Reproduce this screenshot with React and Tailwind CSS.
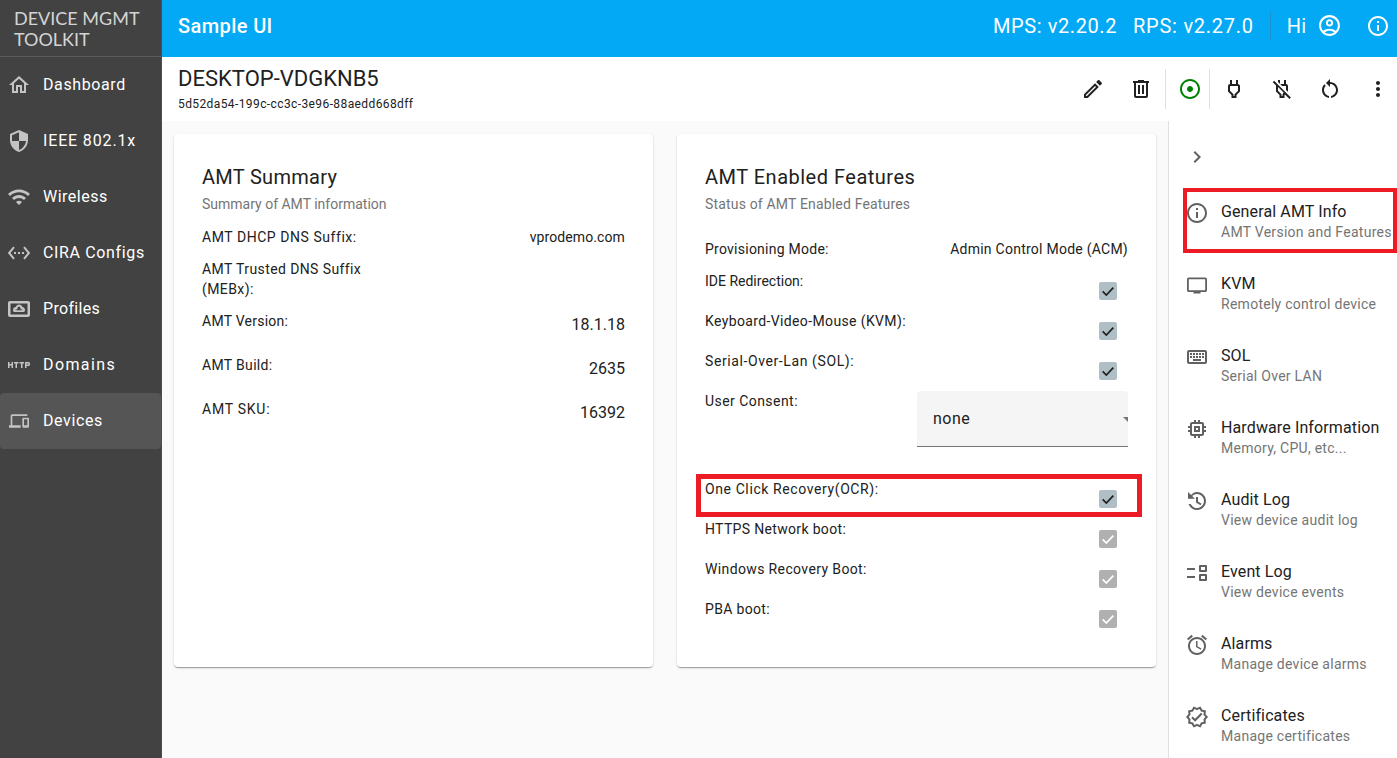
import React from "react";

const icons = {
  home: "M12 5.69l5 4.5V18h-2v-6H9v6H7v-7.81l5-4.5M12 3L2 12h3v8h6v-6h2v6h6v-8h3L12 3z",
  shield: "M12 1L3 5v6c0 5.55 3.84 10.74 9 12 5.16-1.26 9-6.45 9-12V5l-9-4zm0 10.99h7c-.53 4.12-3.28 7.79-7 8.94V12H5V6.3l7-3.11v8.8z",
  wifi: "M1 9l2 2c4.97-4.97 13.03-4.97 18 0l2-2C16.93 2.93 7.08 2.93 1 9zm8 8l3 3 3-3c-1.65-1.66-4.34-1.66-6 0zm-4-4l2 2c2.76-2.76 7.24-2.76 10 0l2-2C15.14 9.14 8.87 9.14 5 13z",
  ethernet: "M7.77 6.76L6.23 5.48.82 12l5.41 6.52 1.54-1.28L3.42 12l4.35-5.24zM7 13h2v-2H7v2zm10-2h-2v2h2v-2zm-6 2h2v-2h-2v2zm6.77-7.52l-1.54 1.28L20.58 12l-4.35 5.24 1.54 1.28L23.18 12l-5.41-6.52z",
  profile: "M3 4h18c1.1 0 2 .9 2 2v12c0 1.1-.9 2-2 2H3c-1.1 0-2-.9-2-2V6c0-1.1.9-2 2-2zm.5 2.5v11h17v-11h-17zM12 7.5c1.6 0 3 1.1 3.4 2.6 1.4.2 2.6 1.4 2.6 2.9 0 .8-.3 1.5-.8 2H6.8c-.5-.5-.8-1.2-.8-2 0-1.5 1.1-2.8 2.7-2.9.5-1.5 1.8-2.6 3.3-2.6zm-2.8 5c-.5 0-.9.3-.9.7h7.4c0-.4-.4-.7-.9-.7h-1l-.4-1.5c-.2-.7-.8-1.2-1.4-1.2s-1.2.5-1.4 1.2l-.4 1.5h-1z",
  http: "M4.5 11h-2V9H1v6h1.5v-2.5h2V15H6V9H4.5v2zm2.5-.5h1.5V15H10v-4.5h1.5V9H7v1.5zm5.5 0H14V15h1.5v-4.5H17V9h-4.5v1.5zm9-1.5H18v6h1.5v-2h2c.8 0 1.5-.7 1.5-1.5v-1c0-.8-.7-1.5-1.5-1.5zm0 2.5h-2v-1h2v1z",
  devices: "M4 6h18V4H4c-1.1 0-2 .9-2 2v11H0v3h14v-3H4V6zm19 2h-6c-.55 0-1 .45-1 1v10c0 .55.45 1 1 1h6c.55 0 1-.45 1-1V9c0-.55-.45-1-1-1zm-1 9h-4v-7h4v7z",
  account: "M12 2C6.48 2 2 6.48 2 12s4.48 10 10 10 10-4.48 10-10S17.52 2 12 2zM7.35 18.5C8.66 17.56 10.26 17 12 17s3.34.56 4.65 1.5c-1.31.94-2.91 1.5-4.65 1.5s-3.34-.56-4.65-1.5zm10.79-1.38C16.45 15.8 14.32 15 12 15s-4.45.8-6.14 2.12C4.7 15.73 4 13.95 4 12c0-4.42 3.58-8 8-8s8 3.58 8 8c0 1.95-.7 3.73-1.86 5.12zM12 6c-1.93 0-3.5 1.57-3.5 3.5S10.07 13 12 13s3.5-1.57 3.5-3.5S13.93 6 12 6zm0 5c-.83 0-1.5-.67-1.5-1.5S11.17 8 12 8s1.5.67 1.5 1.5S12.83 11 12 11z",
  info: "M11 7h2v2h-2zm0 4h2v6h-2zm1-9C6.48 2 2 6.48 2 12s4.48 10 10 10 10-4.48 10-10S17.52 2 12 2zm0 18c-4.41 0-8-3.59-8-8s3.59-8 8-8 8 3.59 8 8-3.59 8-8 8z",
  edit: "M3 17.25V21h3.75L17.81 9.94l-3.75-3.75L3 17.25zM5.92 19H5v-.92l9.06-9.06.92.92L5.92 19zM20.71 5.63l-2.34-2.34c-.2-.2-.45-.29-.71-.29s-.51.1-.7.29l-1.83 1.83 3.75 3.75 1.83-1.83c.39-.39.39-1.02 0-1.41z",
  trash: "M15 4V3H9v1H4v2h1v13c0 1.1.9 2 2 2h10c1.1 0 2-.9 2-2V6h1V4h-5zm2 15H7V6h10v13zM9 8h2v9H9zm4 0h2v9h-2z",
  adjust: "M12 2C6.49 2 2 6.49 2 12s4.49 10 10 10 10-4.49 10-10S17.51 2 12 2zm0 18c-4.41 0-8-3.59-8-8s3.59-8 8-8 8 3.59 8 8-3.59 8-8 8zm3-8c0 1.66-1.34 3-3 3s-3-1.34-3-3 1.34-3 3-3 3 1.34 3 3z",
  power: "M16 7V3h-2v4h-4V3H8v4h-.01C7 6.99 6 7.99 6 8.99v5.49L9.5 18v3h5v-3l3.5-3.51v-5.5c0-1-1-2-2-2zm0 6.65l-3.5 3.52V19h-1v-1.83L8 13.65V9h8v4.65z",
  powerOff: "M10 3H8v1.88l2 2zm6 6v3.88l1.8 1.8.2-.2V9c0-1.1-.9-2-2-2V3h-2v4h-3.88l2 2H16zM4.12 3.84L2.71 5.25 6.07 8.61c-.03.13-.07.26-.07.39v5.48L9.5 18v3h5v-3l.48-.48 4.47 4.47 1.41-1.41L4.12 3.84zm8.38 13.33V19h-1v-1.83L8 13.65v-3.73l5.57 5.57-1.07 1.68z",
  restart: "M12 5V2L8 6l4 4V7c3.31 0 6 2.69 6 6 0 2.97-2.17 5.43-5 5.91v2.02c3.95-.49 7-3.85 7-7.93 0-4.42-3.58-8-8-8zm-6 8c0-1.65.67-3.15 1.76-4.24L6.34 7.34C4.9 8.79 4 10.79 4 13c0 4.08 3.05 7.44 7 7.93v-2.02c-2.83-.48-5-2.94-5-5.91z",
  more: "M12 8c1.1 0 2-.9 2-2s-.9-2-2-2-2 .9-2 2 .9 2 2 2zm0 2c-1.1 0-2 .9-2 2s.9 2 2 2 2-.9 2-2-.9-2-2-2zm0 6c-1.1 0-2 .9-2 2s.9 2 2 2 2-.9 2-2-.9-2-2-2z",
  chevron: "M10 6L8.59 7.41 13.17 12l-4.58 4.59L10 18l6-6z",
  tv: "M20.2 4.5H3.8c-1 0-1.8.8-1.8 1.8v11c0 1 .8 1.8 1.8 1.8h4.7v1.4h7v-1.4h4.7c1 0 1.8-.8 1.8-1.8v-11c0-1-.8-1.8-1.8-1.8zm0 12.8H3.8v-11h16.4v11z",
  keyboard: "M20 7v10H4V7h16m0-2H4c-1.1 0-1.99.9-1.99 2L2 17c0 1.1.9 2 2 2h16c1.1 0 2-.9 2-2V7c0-1.1-.9-2-2-2zm-9 3h2v2h-2zm0 3h2v2h-2zM8 8h2v2H8zm0 3h2v2H8zm-3 0h2v2H5zm0-3h2v2H5zm3 6h8v2H8zm6-3h2v2h-2zm0-3h2v2h-2zm3 3h2v2h-2zm0-3h2v2h-2z",
  memory: "M15 9H9v6h6V9zm-2 4h-2v-2h2v2zm8-2V9h-2V7c0-1.1-.9-2-2-2h-2V3h-2v2h-2V3H9v2H7c-1.1 0-2 .9-2 2v2H3v2h2v2H3v2h2v2c0 1.1.9 2 2 2h2v2h2v-2h2v2h2v-2h2c1.1 0 2-.9 2-2v-2h2v-2h-2v-2h2zm-4 6H7V7h10v10z",
  history: "M12 3a9 9 0 1 1-8.49 12h2.14A7 7 0 1 0 12 5c-1.9 0-3.6.76-4.86 2L10 9.83H3V3l3.1 3.1C7.6 4.2 9.7 3 12 3zm-1 5h2v4.6l3.5 2.1-1 1.6-4.5-2.7V8z",
  events: "M2 7h8v2H2V7zm0 8h8v2H2v-2zM15 4h6a1 1 0 0 1 1 1v5a1 1 0 0 1-1 1h-6a1 1 0 0 1-1-1V5a1 1 0 0 1 1-1zm1 2v3h4V6h-4zm-1 7h6a1 1 0 0 1 1 1v5a1 1 0 0 1-1 1h-6a1 1 0 0 1-1-1v-5a1 1 0 0 1 1-1zm1 2v3h4v-3h-4z",
  alarm: "M22 5.72l-4.6-3.86-1.29 1.53 4.6 3.86L22 5.72zM7.88 3.39L6.6 1.86 2 5.71l1.29 1.53 4.59-3.85zM12.5 8H11v6l4.75 2.85.75-1.23-4-2.37V8zM12 4c-4.97 0-9 4.03-9 9s4.03 9 9 9 9-4.03 9-9-4.03-9-9-9zm0 16c-3.87 0-7-3.13-7-7s3.13-7 7-7 7 3.13 7 7-3.13 7-7 7z",
  verified: "M23 11.99l-2.44-2.79.34-3.69-3.61-.82L15.4 1.5 12 2.96 8.6 1.5 6.71 4.69 3.1 5.5l.34 3.7L1 11.99l2.44 2.79-.34 3.7 3.61.82 1.89 3.2 3.4-1.47 3.4 1.46 1.89-3.19 3.61-.82-.34-3.69 2.44-2.8zm-3.95 1.48l-.56.65.08.85.18 1.95-1.9.43-.84.19-.44.74-.99 1.68-1.78-.77-.8-.34-.79.34-1.78.77-.99-1.67-.44-.74-.84-.19-1.9-.43.18-1.96.08-.85-.56-.65L3.67 12l1.29-1.48.56-.65-.09-.85-.18-1.94 1.9-.43.84-.19.44-.74.99-1.68 1.78.77.8.34.79-.34 1.78-.77.99 1.68.44.74.84.19 1.9.43-.18 1.95-.08.85.56.65 1.29 1.47-1.28 1.48zM10.09 13.75l-2.32-2.33-1.48 1.49 3.8 3.81 7.34-7.36-1.48-1.49z",
};

const Icon = ({ name, className }) => (
  <svg viewBox="0 0 24 24" fill="currentColor" className={className}>
    <path d={icons[name]} />
  </svg>
);

const navItems = [
  { label: "Dashboard", icon: "home", track: "tracking-[0.6px]" },
  { label: "IEEE 802.1x", icon: "shield", track: "tracking-[0.85px]" },
  { label: "Wireless", icon: "wifi", track: "tracking-[0.5px]" },
  { label: "CIRA Configs", icon: "ethernet", track: "tracking-[0.65px]" },
  { label: "Profiles", icon: "profile", track: "tracking-[0.3px]" },
  { label: "Domains", icon: "http", track: "tracking-[1.4px]" },
  { label: "Devices", icon: "devices", track: "tracking-[0.6px]", size: "w-[20px] h-[20px]", active: true },
];

const panelItems = [
  { title: "General AMT Info", sub: "AMT Version and Features", icon: "info", marked: true },
  { title: "KVM", sub: "Remotely control device", icon: "tv" },
  { title: "SOL", sub: "Serial Over LAN", icon: "keyboard" },
  { title: "Hardware Information", sub: "Memory, CPU, etc...", icon: "memory" },
  { title: "Audit Log", sub: "View device audit log", icon: "history" },
  { title: "Event Log", sub: "View device events", icon: "events" },
  { title: "Alarms", sub: "Manage device alarms", icon: "alarm" },
  { title: "Certificates", sub: "Manage certificates", icon: "verified" },
];

const summaryRows = [
  { label: "AMT Version:", value: "18.1.18", track: "tracking-[0.25px]" },
  { label: "AMT Build:", value: "2635", track: "tracking-[0.33px]" },
  { label: "AMT SKU:", value: "16392", track: "tracking-[0.75px]" },
];

const cardClass = "w-[479px] h-[533px] bg-white rounded-[4px] shadow-[0_2px_1px_-1px_rgba(0,0,0,0.2),0_1px_1px_0_rgba(0,0,0,0.14),0_1px_3px_0_rgba(0,0,0,0.12)] pt-[30px]";

const Check = ({ muted }) => (
  <span className={`flex w-[18px] h-[18px] items-center justify-center rounded-[2px] ${muted ? "bg-[#b0b0b0]" : "bg-[#b0bec5]"}`}>
    <svg viewBox="0 0 24 24" className="w-[16px] h-[16px]" fill="none" stroke={muted ? "#ffffff" : "#212121"} strokeWidth="2.6">
      <path d="M4 12.5l5.5 5.5L20 7" />
    </svg>
  </span>
);

const FeatureRow = ({ label, muted, track }) => (
  <div className="flex justify-between h-[40px] pl-[28px] pr-[39px]">
    <span className={`text-[14px] leading-[20px] text-[#212121] ${track}`}>{label}</span>
    <span className="pt-[11px]"><Check muted={muted} /></span>
  </div>
);

export default function App() {
  return (
    <div className="flex w-[1397px] h-[758px] overflow-hidden bg-[#fafafa] font-['Roboto',sans-serif] text-[#212121]">
      <aside className="w-[162px] shrink-0 bg-[#424242] border-r border-[#4d4d4d] text-white">
        <div className="h-[57px] border-b border-[#5c5c5c] pl-[14px] pt-[8px] text-[18px] leading-[21px] text-[#d4d4d4] font-['Lato',sans-serif]">
          DEVICE MGMT<br />TOOLKIT
        </div>
        <nav>
          {navItems.map((item) => (
            <div key={item.label} className={`flex items-center h-[56px] rounded-[4px] ${item.active ? "bg-[#555555]" : ""}`}>
              <span className="flex w-[43px] justify-center pl-[1px] pr-[6px] text-[#c4c4c4]">
                <Icon name={item.icon} className={item.size || "w-[24px] h-[24px]"} />
              </span>
              <span className={`text-[16px] leading-[24px] ${item.track}`}>{item.label}</span>
            </div>
          ))}
        </nav>
      </aside>

      <div className="flex-1 min-w-0 flex flex-col">
        <header className="h-[57px] shrink-0 bg-[#03a9f4] text-white flex items-center pl-[16px] pb-[6px]">
          <span className="text-[20px] font-medium tracking-[0.4px]">Sample UI</span>
          <span className="ml-auto text-[20px] tracking-[0.6px]">MPS: v2.20.2</span>
          <span className="ml-[16px] text-[20px] tracking-[0.75px]">RPS: v2.27.0</span>
          <span className="ml-[16px] w-px h-[30px] bg-[#1a94cf]" />
          <span className="ml-[16px] text-[20px]">Hi</span>
          <Icon name="account" className="ml-[11px] w-[25px] h-[25px]" />
          <Icon name="info" className="ml-[24px] mr-[7px] w-[24px] h-[24px]" />
        </header>

        <div className="h-[64px] shrink-0 bg-white flex items-start pl-[16px]">
          <div className="pt-[9px]">
            <div className="text-[22px] leading-[26px]">DESKTOP-VDGKNB5</div>
            <div className="text-[12px] leading-[16px] mt-[4px] tracking-[0.4px]">5d52da54-199c-cc3c-3e96-88aedd668dff</div>
          </div>
          <div className="ml-auto flex items-center h-[40px] mt-[12px] text-[#212121]">
            <Icon name="edit" className="w-[24px] h-[24px]" />
            <Icon name="trash" className="ml-[24px] w-[24px] h-[24px]" />
            <span className="ml-[12px] w-px h-[40px] bg-[#e0e0e0]" />
            <Icon name="adjust" className="ml-[12px] w-[24px] h-[24px] text-[#008000]" />
            <span className="ml-[7px] w-px h-[40px] bg-[#e0e0e0]" />
            <Icon name="power" className="ml-[12px] w-[24px] h-[24px]" />
            <Icon name="powerOff" className="ml-[24px] w-[24px] h-[24px]" />
            <Icon name="restart" className="ml-[24px] w-[24px] h-[24px]" />
            <Icon name="more" className="ml-[24px] mr-[7px] w-[24px] h-[24px]" />
          </div>
        </div>

        <div className="flex-1 min-h-0 flex">
          <main className="w-[1006px] shrink-0 flex items-start gap-[24px] pl-[12px] pt-[13px]">
            <section className={cardClass}>
              <div className="px-[28px]">
                <h2 className="text-[20px] leading-[26px] font-normal tracking-[0.3px]">AMT Summary</h2>
                <p className="text-[14px] leading-[20px] mt-[4px] text-[#757575]">Summary of AMT information</p>
                <div className="flex justify-between mt-[13px] h-[32px] text-[14px] leading-[20px]">
                  <span className="tracking-[0.55px]">AMT DHCP DNS Suffix:</span>
                  <span className="tracking-[0.1px]">vprodemo.com</span>
                </div>
                <div className="h-[52px] text-[14px] leading-[20px] tracking-[0.4px]">AMT Trusted DNS Suffix<br />(MEBx):</div>
                {summaryRows.map((row) => (
                  <div key={row.label} className="flex justify-between h-[44px]">
                    <span className={`text-[14px] leading-[20px] ${row.track}`}>{row.label}</span>
                    <span className="text-[16px] leading-[24px] mt-[2px]">{row.value}</span>
                  </div>
                ))}
              </div>
            </section>

            <section className={cardClass}>
              <div className="px-[28px]">
                <h2 className="text-[20px] leading-[26px] font-normal tracking-[0.5px]">AMT Enabled Features</h2>
                <p className="text-[14px] leading-[20px] mt-[4px] text-[#757575] tracking-[0.17px]">Status of AMT Enabled Features</p>
                <div className="flex justify-between mt-[25px] h-[32px] text-[14px] leading-[20px]">
                  <span className="tracking-[0.25px]">Provisioning Mode:</span>
                  <span className="tracking-[0.25px]">Admin Control Mode (ACM)</span>
                </div>
              </div>
              <FeatureRow label="IDE Redirection:" />
              <FeatureRow label="Keyboard-Video-Mouse (KVM):" track="tracking-[0.37px]" />
              <FeatureRow label="Serial-Over-Lan (SOL):" track="tracking-[0.6px]" />
              <div className="flex justify-between h-[88px] px-[28px]">
                <span className="text-[14px] leading-[20px] tracking-[0.45px]">User Consent:</span>
                <div className="relative overflow-hidden w-[211px] h-[56px] bg-[#f5f5f5] rounded-t-[4px] border-b border-[#757575] pl-[16px] text-[16px] leading-[56px] tracking-[0.5px]">
                  none
                  <span className="absolute right-[-5px] top-[26px] w-0 h-0 border-x-[5px] border-t-[5px] border-x-transparent border-t-[#757575]" />
                </div>
              </div>
              <div className="relative">
                <span className="absolute left-[19px] right-[14px] top-[-5px] h-[43px] border-[5px] border-[#ed1c24]" />
                <FeatureRow label="One Click Recovery(OCR):" track="tracking-[0.6px]" />
              </div>
              <FeatureRow label="HTTPS Network boot:" track="tracking-[0.33px]" muted />
              <FeatureRow label="Windows Recovery Boot:" track="tracking-[0.37px]" muted />
              <FeatureRow label="PBA boot:" track="tracking-[0.33px]" muted />
            </section>
          </main>

          <aside className="flex-1 min-w-0 bg-white border-l border-[#e0e0e0] overflow-hidden">
            <div className="h-[69px] pl-[16px] pt-[24px] text-[#616161]">
              <Icon name="chevron" className="w-[24px] h-[24px]" />
            </div>
            {panelItems.map((item) => (
              <div key={item.title} className="relative flex h-[72px] pl-[16px] pt-[10px]">
                {item.marked && <span className="absolute left-[14px] right-0 top-[-2px] h-[65px] border-[4px] border-[#ed1c24]" />}
                <Icon name={item.icon} className="w-[24px] h-[24px] mt-[1px] shrink-0 text-[#616161]" />
                <div className="pl-[12px] whitespace-nowrap">
                  <div className="text-[16px] leading-[24px] tracking-[0.12px]">{item.title}</div>
                  <div className="text-[14px] leading-[18px] -mt-[1px] text-[#757575] tracking-[0.27px]">{item.sub}</div>
                </div>
              </div>
            ))}
          </aside>
        </div>
      </div>
    </div>
  );
}
